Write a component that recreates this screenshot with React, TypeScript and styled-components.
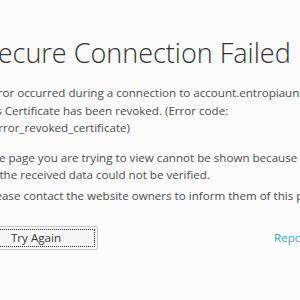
import React from "react";
import styled, { createGlobalStyle } from "styled-components";

const GlobalStyle = createGlobalStyle`
  html, body {
    margin: 0;
    padding: 0;
    background: #fbfbfb;
    overflow: hidden;
  }
`;

export default function App() {
  return (
    <>
      <GlobalStyle />
      <Page>
        <Content>
          <Title>Secure Connection Failed</Title>
          <Description>
            An error occurred during a connection to account.entropiauniverse.com.
            <br />
            Peer's Certificate has been revoked. (Error code:
            <br />
            sec_error_revoked_certificate)
          </Description>
          <Reasons>
            <Reason>
              The page you are trying to view cannot be shown because the authenticity
              <br />
              of the received data could not be verified.
            </Reason>
            <Reason>Please contact the website owners to inform them of this problem.</Reason>
          </Reasons>
          <Actions>
            <TryAgain>
              <span>Try Again</span>
            </TryAgain>
            <ReportLink href="#">Report this error</ReportLink>
          </Actions>
        </Content>
      </Page>
    </>
  );
}

const Page = styled.div`
  width: 300px;
  height: 300px;
  overflow: hidden;
  background: #fbfbfb;
  font-family: "Open Sans", "Noto Sans", sans-serif;
  color: #4d4d4d;
`;

const Content = styled.div`
  margin-left: -31px;
  padding-top: 35px;
  width: 700px;
`;

const Title = styled.h1`
  margin: 0 0 13px 14px;
  font-size: 27px;
  font-weight: 300;
  line-height: 36px;
  color: #333333;
  white-space: nowrap;
`;

const Description = styled.p`
  margin: 0;
  font-size: 11.6px;
  line-height: 17.5px;
  white-space: nowrap;
`;

const Reasons = styled.ul`
  margin: 12px 0 0;
  padding-left: 16.5px;
  font-size: 11.6px;
  line-height: 17px;
  white-space: nowrap;
`;

const Reason = styled.li`
  & + & {
    margin-top: 4px;
  }
`;

const Actions = styled.div`
  display: flex;
  align-items: center;
  gap: 176px;
  margin-top: 22px;
  padding-left: 5px;
`;

const TryAgain = styled.button`
  width: 124px;
  height: 24px;
  padding: 2px;
  background: #f7f7f7;
  border: 1px solid #c4c4c4;
  border-radius: 2px;
  font-family: inherit;
  font-size: 11.6px;
  color: #333333;
  span {
    display: flex;
    align-items: center;
    justify-content: center;
    height: 100%;
    box-sizing: border-box;
    border: 1px dotted #333333;
  }
`;

const ReportLink = styled.a`
  font-size: 11.6px;
  color: #4aa3cc;
  text-decoration: none;
  white-space: nowrap;
`;
